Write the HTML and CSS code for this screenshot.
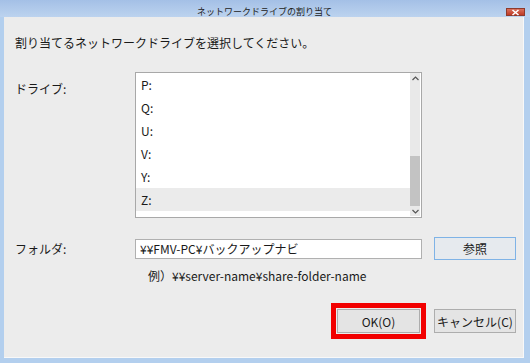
FILE: index.html
```html
<!DOCTYPE html>
<html lang="ja">

<head>
    <meta charset="UTF-8">
    <meta name="viewport" content="width=device-width, initial-scale=1.0">
    <title>ネットワークドライブの割り当て</title>
    <link rel="stylesheet" href="styles.css">
</head>

<body>
    <div class="dialog">
        <div class="titlebar">
            <div></div>
            <div class="title">ネットワークドライブの割り当て</div>
            <div class="close">
                <svg width="9" height="7" viewBox="0 0 9 7">
                    <path d="M1.5 1 L7.5 6 M7.5 1 L1.5 6" stroke="#fff" stroke-width="1.6" />
                </svg>
            </div>
        </div>
        <div class="body">
            <div class="lead">割り当てるネットワークドライブを選択してください。</div>

            <div class="row drive-row">
                <div class="label">ドライブ:</div>
                <div class="listbox">
                    <div class="items">
                        <div class="item">P:</div>
                        <div class="item">Q:</div>
                        <div class="item">U:</div>
                        <div class="item">V:</div>
                        <div class="item">Y:</div>
                        <div class="item selected">Z:</div>
                    </div>
                    <div class="scrollbar">
                        <div class="arrow">
                            <svg width="7" height="5" viewBox="0 0 7 5"><path d="M0.5 4 L3.5 1 L6.5 4" fill="none" stroke="#555" stroke-width="1.2" /></svg>
                        </div>
                        <div class="track">
                            <div class="thumb"></div>
                        </div>
                        <div class="arrow">
                            <svg width="7" height="5" viewBox="0 0 7 5"><path d="M0.5 1 L3.5 4 L6.5 1" fill="none" stroke="#555" stroke-width="1.2" /></svg>
                        </div>
                    </div>
                </div>
            </div>

            <div class="row folder-row">
                <div class="label">フォルダ:</div>
                <div class="textbox">¥¥FMV-PC¥バックアップナビ</div>
                <div class="btn browse">参照</div>
            </div>

            <div class="example">例）¥¥server-name¥share-folder-name</div>

            <div class="actions">
                <div class="btn ok">OK(O)</div>
                <div class="btn">キャンセル(C)</div>
            </div>
        </div>
    </div>
</body>

</html>
```

FILE: styles.css
```css
:root {
    --label-width: 120px;
    --field-width: 287px;
    --btn-width: 82px;
}

html,
body {
    margin: 0;
    padding: 0;
}

body {
    width: 530px;
    height: 363px;
    font-family: "Noto Sans CJK JP", "Noto Sans", sans-serif;
    font-size: 11px;
    color: #1a1a1a;
}

.dialog {
    width: 530px;
    height: 363px;
    box-sizing: border-box;
    padding: 0 6px 5px 4px;
    background: #b3cfee;
    display: flex;
    flex-direction: column;
}

.titlebar {
    height: 17px;
    margin: 0 -6px 0 -4px;
    padding: 0 5px 0 4px;
    background: linear-gradient(#a4c0e6, #bcd3ef);
    display: grid;
    grid-template-columns: 1fr auto 1fr;
    align-items: start;
}

.title {
    font-size: 9px;
    line-height: 9px;
    margin-top: 7px;
    color: #222;
}

.close {
    justify-self: end;
    width: 19px;
    height: 8px;
    margin-top: 8px;
    margin-right: 0;
    background: linear-gradient(#d9705c, #bf3a25);
    border: 1px solid #8e3a2c;
    box-sizing: border-box;
    display: flex;
    align-items: center;
    justify-content: center;
}

.close svg {
    display: block;
}

.body {
    flex: 1;
    background: #ececec;
    border-right: 1px solid #f8f8f8;
    border-bottom: 1px solid #f8f8f8;
    padding: 0 0 0 11px;
    display: flex;
    flex-direction: column;
}

.lead {
    font-size: 12px;
    line-height: 16px;
    margin-top: 18px;
}

.row {
    display: flex;
    align-items: flex-start;
}

.label {
    width: var(--label-width);
    font-size: 12px;
    line-height: 16px;
}

.drive-row {
    margin-top: 21px;
}

.drive-row .label {
    margin-top: 9px;
}

.listbox {
    width: var(--field-width);
    height: 146px;
    box-sizing: border-box;
    border: 1px solid #a8a8a8;
    background: #fff;
    display: flex;
}

.items {
    flex: 1;
}

.item {
    height: 23px;
    line-height: 23px;
    padding-left: 5px;
    font-size: 12px;
}

.item.selected {
    background: #ebebeb;
}

.scrollbar {
    width: 10px;
    margin: 0 1px 1px 0;
    background: #e9e9e9;
    display: flex;
    flex-direction: column;
}

.arrow {
    height: 10px;
    display: flex;
    align-items: center;
    justify-content: center;
}

.track {
    flex: 1;
    display: flex;
    flex-direction: column;
    justify-content: flex-end;
}

.thumb {
    height: 50px;
    background: #c3c3c3;
}

.folder-row {
    margin-top: 19px;
    align-items: center;
}

.textbox {
    width: var(--field-width);
    height: 20px;
    box-sizing: border-box;
    border: 1px solid #b0b0b0;
    background: #fff;
    font-size: 12px;
    line-height: 18px;
    padding-left: 4px;
}

.btn {
    width: var(--btn-width);
    height: 23px;
    box-sizing: border-box;
    border: 1px solid #adadad;
    background: #e4e4e4;
    font-size: 12px;
    display: flex;
    align-items: center;
    justify-content: center;
}

.browse {
    margin-left: 12px;
    border-color: #7fb3e6;
    background: #e6eaee;
}

.example {
    margin: 8px 0 0 133px;
    font-size: 12px;
    line-height: 16px;
}

.actions {
    margin-top: 25px;
    display: flex;
    justify-content: flex-end;
    gap: 14px;
    padding-right: 7px;
}

.actions .btn {
    height: 24px;
}

.ok {
    width: 83px;
    outline: 5px solid #f20000;
    outline-offset: 1px;
}
```
